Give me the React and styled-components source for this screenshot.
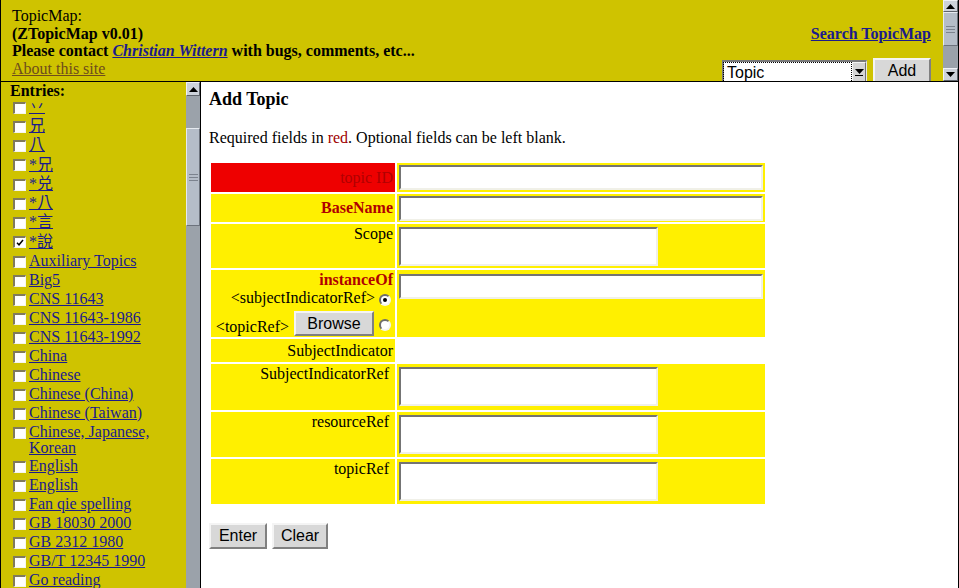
import styled, { createGlobalStyle } from "styled-components";

const GlobalStyle = createGlobalStyle`
  html, body {
    margin: 0;
    padding: 0;
    overflow: hidden;
    background: #fff;
  }
  body {
    font-family: "Liberation Serif", "Noto Sans CJK TC", serif;
    font-size: 16px;
    color: #000;
  }
`;

const OLIVE = "#cfc300";
const LINK = "#1b1b8c";
const DARK_RED = "#b00000";

const Page = styled.div`
  width: 959px;
  height: 588px;
  display: grid;
  grid-template-columns: 200px 1fr;
  grid-template-rows: 82px 1fr;
  overflow: hidden;
`;

/* ---------- scrollbars ---------- */

const Scrollbar = styled.div`
  width: ${(p) => p.$w}px;
  flex: none;
  display: flex;
  flex-direction: column;
  background: #9ba2aa;
  box-sizing: border-box;
`;

const ScrollArrow = styled.div`
  height: ${(p) => p.$h}px;
  flex: none;
  box-sizing: border-box;
  background: #cdd2da;
  border: 1px solid;
  border-color: #f0f2f6 #5f646c #5f646c #f0f2f6;
  display: flex;
  align-items: center;
  justify-content: center;
`;

const ScrollGap = styled.div`
  height: ${(p) => p.$h}px;
  flex: none;
`;

const ScrollRest = styled.div`
  flex: 1;
`;

const ScrollThumb = styled.div`
  height: ${(p) => p.$h}px;
  flex: none;
  box-sizing: border-box;
  background: #b5bdc8;
  border: 1px solid;
  border-color: #e6eaf0 #6c727c #6c727c #e6eaf0;
  display: flex;
  align-items: center;
  justify-content: center;
`;

const Arrow = ({ down }) => (
  <svg width="9" height="5" viewBox="0 0 9 5">
    <polygon points={down ? "0,0 9,0 4.5,5" : "0,5 9,5 4.5,0"} fill="#000" />
  </svg>
);

const Grip = () => (
  <svg width="9" height="9" viewBox="0 0 9 9">
    <g stroke="#7c838e" strokeWidth="1">
      <line x1="0" y1="1.5" x2="9" y2="1.5" />
      <line x1="0" y1="4.5" x2="9" y2="4.5" />
      <line x1="0" y1="7.5" x2="9" y2="7.5" />
    </g>
  </svg>
);

const VScroll = ({ w, arrow, gap, thumb, noDown }) => (
  <Scrollbar $w={w}>
    <ScrollArrow $h={arrow}>
      <Arrow />
    </ScrollArrow>
    <ScrollGap $h={gap} />
    <ScrollThumb $h={thumb}>
      <Grip />
    </ScrollThumb>
    <ScrollRest />
    {!noDown && (
      <ScrollArrow $h={arrow + 1}>
        <Arrow down />
      </ScrollArrow>
    )}
  </Scrollbar>
);

/* ---------- form controls ---------- */

const Button = styled.button`
  box-sizing: border-box;
  width: ${(p) => p.$w}px;
  height: ${(p) => p.$h || 26}px;
  margin: ${(p) => p.$mt || 0}px 0 0;
  padding: 0;
  background: #d8d8d8;
  border: 2px solid;
  border-color: #f4f4f4 #808080 #808080 #f4f4f4;
  font-family: "Liberation Sans", Arial, sans-serif;
  font-size: 16px;
  color: #000;
  flex: none;
`;

const TextField = styled.input`
  box-sizing: border-box;
  display: block;
  width: 364px;
  height: 25px;
  margin: ${(p) => p.$mt || 0}px 0 0;
  background: #fff;
  border: 2px solid;
  border-color: #747474 #f0f0e8 #f0f0e8 #747474;
  padding: 0 3px;
`;

const TextArea = styled.textarea`
  box-sizing: border-box;
  display: block;
  width: 259px;
  height: 39px;
  margin: 2px 0 0;
  background: #fff;
  border: 2px solid;
  border-color: #747474 #f0f0e8 #f0f0e8 #747474;
  resize: none;
`;

const Radio = styled.span`
  box-sizing: border-box;
  width: 12px;
  height: 12px;
  margin: 0 2px ${(p) => p.$mb}px ${(p) => p.$ml}px;
  border-radius: 50%;
  border: 2px solid;
  border-color: #6d6d6d #f4f4f4 #f4f4f4 #6d6d6d;
  background: #fff;
  display: flex;
  align-items: center;
  justify-content: center;
  flex: none;
  &::after {
    content: "";
    width: 4px;
    height: 4px;
    border-radius: 50%;
    background: ${(p) => (p.$on ? "#000" : "transparent")};
  }
`;

const Check = styled.span`
  box-sizing: border-box;
  width: 13px;
  height: 12px;
  margin: 4px 3px 0 3px;
  background: #fff;
  border: 2px solid;
  border-color: #807a5c #f6f6ee #f6f6ee #807a5c;
  border-right-width: 1px;
  border-bottom-width: 1px;
  flex: none;
  display: flex;
  align-items: center;
  justify-content: center;
`;

/* ---------- top frame ---------- */

const TopFrame = styled.header`
  grid-column: 1 / 3;
  display: flex;
  background: ${OLIVE};
  border-left: 1px solid #000;
  border-right: 1px solid #000;
  border-bottom: 1px solid #000;
  overflow: hidden;
`;

const TopContent = styled.div`
  flex: 1;
  display: flex;
  justify-content: space-between;
  padding: 7px 12px 0 11px;
`;

const Intro = styled.div`
  line-height: 17.6px;
`;

const Bold = styled.span`
  font-weight: bold;
`;

const AuthorLink = styled.a`
  color: ${LINK};
  font-weight: bold;
  font-style: italic;
  text-decoration: underline;
`;

const AboutLink = styled.a`
  color: #6e4c1c;
  text-decoration: underline;
`;

const RightCol = styled.div`
  display: flex;
  flex-direction: column;
  align-items: flex-end;
  padding-top: 18px;
`;

const SearchLink = styled.a`
  color: ${LINK};
  font-weight: bold;
  line-height: 17.6px;
  text-decoration: underline;
`;

const ToolRow = styled.div`
  display: flex;
  gap: 6px;
  margin-top: 15px;
`;

const Select = styled.div`
  box-sizing: border-box;
  width: 145px;
  height: 25px;
  margin-top: 2px;
  display: flex;
  background: #fff;
  border: 2px solid;
  border-color: #7a7a7a #e8e8e8 #e8e8e8 #7a7a7a;
  border-right-width: 1px;
`;

const SelectText = styled.div`
  flex: 1;
  margin: 1px 1px 1px 0;
  outline: 1px dotted #000;
  font-family: "Liberation Sans", Arial, sans-serif;
  font-size: 16px;
  line-height: 19px;
  padding-left: 3px;
`;

const SelectArrow = styled.div`
  box-sizing: border-box;
  width: 14px;
  background: #d4d4d4;
  border: 1px solid;
  border-color: #f4f4f4 #707070 #707070 #f4f4f4;
  display: flex;
  flex-direction: column;
  align-items: center;
  justify-content: center;
  gap: 1px;
`;

/* ---------- left frame ---------- */

const LeftFrame = styled.nav`
  display: flex;
  background: ${OLIVE};
  border-left: 1px solid #000;
  overflow: hidden;
`;

const EntryList = styled.div`
  flex: 1;
  padding-left: 9px;
`;

const EntriesTitle = styled.div`
  font-weight: bold;
  line-height: 15px;
  padding-top: 0.5px;
`;

const EntryRow = styled.div`
  display: flex;
  align-items: flex-start;
  min-height: ${(p) => (p.$cjk ? 19.25 : 19)}px;
`;

const EntryLink = styled.a`
  color: ${LINK};
  text-decoration: underline;
  line-height: 16.5px;
  padding-top: 1.25px;
`;

const Tick = () => (
  <svg width="8" height="7" viewBox="0 0 8 7">
    <path d="M1 3.8 L3 5.8 L7 1" stroke="#000" strokeWidth="1.5" fill="none" />
  </svg>
);

const entries = [
  { t: "丷", cjk: true },
  { t: "兄", cjk: true },
  { t: "八", cjk: true },
  { t: "*兄", cjk: true },
  { t: "*兑", cjk: true },
  { t: "*八", cjk: true },
  { t: "*言", cjk: true },
  { t: "*說", cjk: true, on: true },
  { t: "Auxiliary Topics" },
  { t: "Big5" },
  { t: "CNS 11643" },
  { t: "CNS 11643-1986" },
  { t: "CNS 11643-1992" },
  { t: "China" },
  { t: "Chinese" },
  { t: "Chinese (China)" },
  { t: "Chinese (Taiwan)" },
  { t: "Chinese, Japanese, Korean" },
  { t: "English" },
  { t: "English" },
  { t: "Fan qie spelling" },
  { t: "GB 18030 2000" },
  { t: "GB 2312 1980" },
  { t: "GB/T 12345 1990" },
  { t: "Go reading" },
];

/* ---------- main frame ---------- */

const MainFrame = styled.main`
  background: #fff;
  border-left: 1px solid #000;
  border-right: 1px solid #000;
  padding: 6px 8px;
  overflow: hidden;
`;

const Heading = styled.h1`
  margin: 0;
  font-size: 18px;
  line-height: 22px;
  font-weight: bold;
`;

const Lead = styled.p`
  margin: 19px 0 0;
  line-height: 18px;
`;

const Red = styled.span`
  color: #a00000;
`;

const FormTable = styled.table`
  margin-top: 14px;
  border-collapse: separate;
  border-spacing: 2px;
`;

const Row = styled.tr`
  height: ${(p) => p.$h}px;
`;

const LabelCell = styled.td`
  width: 180px;
  padding: 1px 2px;
  text-align: right;
  vertical-align: ${(p) => (p.$top ? "top" : "middle")};
  background: ${(p) => (p.$red ? "#ee0000" : "#fff000")};
  line-height: 18px;
  color: ${(p) => (p.$req ? DARK_RED : "#000")};
  font-weight: ${(p) => (p.$bold ? "bold" : "normal")};
`;

const InputCell = styled.td`
  width: 364px;
  padding: 1px 2px;
  vertical-align: ${(p) => (p.$top ? "top" : "middle")};
  background: ${(p) => (p.$empty ? "transparent" : "#fff000")};
`;

const LabelStack = styled.div`
  display: flex;
  flex-direction: column;
  align-items: flex-end;
`;

const ReqName = styled.div`
  color: ${DARK_RED};
  font-weight: bold;
  line-height: 18px;
`;

const ChoiceLine = styled.div`
  display: flex;
  align-items: flex-end;
  line-height: 18px;
  gap: ${(p) => p.$gap || 0}px;
`;

const ButtonBar = styled.div`
  display: flex;
  gap: 5px;
  margin-top: 17px;
`;

const App = () => {
  return (
    <>
      <GlobalStyle />
      <Page>
        <TopFrame>
          <TopContent>
            <Intro>
              TopicMap:
              <br />
              <Bold>(ZTopicMap v0.01)</Bold>
              <br />
              <Bold>
                Please contact <AuthorLink href="#">Christian Wittern</AuthorLink> with bugs,
                comments, etc...
              </Bold>
              <br />
              <AboutLink href="#">About this site</AboutLink>
            </Intro>
            <RightCol>
              <SearchLink href="#">Search TopicMap</SearchLink>
              <ToolRow>
                <Select>
                  <SelectText>Topic</SelectText>
                  <SelectArrow>
                    <Arrow down />
                    <svg width="8" height="1">
                      <rect width="8" height="1" fill="#000" />
                    </svg>
                  </SelectArrow>
                </Select>
                <Button $w={58}>Add</Button>
              </ToolRow>
            </RightCol>
          </TopContent>
          <VScroll w={15} arrow={12} gap={0} thumb={34} />
        </TopFrame>

        <LeftFrame>
          <EntryList>
            <EntriesTitle>Entries:</EntriesTitle>
            {entries.map((e, i) => (
              <EntryRow key={i} $cjk={e.cjk}>
                <Check>{e.on && <Tick />}</Check>
                <EntryLink href="#">{e.t}</EntryLink>
              </EntryRow>
            ))}
          </EntryList>
          <VScroll w={14} arrow={14} gap={32} thumb={98} noDown />
        </LeftFrame>

        <MainFrame>
          <Heading>Add Topic</Heading>
          <Lead>
            Required fields in <Red>red</Red>. Optional fields can be left blank.
          </Lead>
          <FormTable>
            <tbody>
              <Row $h={29}>
                <LabelCell $red $req>topic ID</LabelCell>
                <InputCell>
                  <TextField />
                </InputCell>
              </Row>
              <Row $h={28}>
                <LabelCell $req $bold>BaseName</LabelCell>
                <InputCell>
                  <TextField />
                </InputCell>
              </Row>
              <Row $h={44}>
                <LabelCell $top>Scope</LabelCell>
                <InputCell $top>
                  <TextArea />
                </InputCell>
              </Row>
              <Row $h={67}>
                <LabelCell $top>
                  <LabelStack>
                    <ReqName>instanceOf</ReqName>
                    <ChoiceLine>
                      &lt;subjectIndicatorRef&gt;
                      <Radio $on $mb={1} $ml={4} />
                    </ChoiceLine>
                    <ChoiceLine $gap={5}>
                      <span>&lt;topicRef&gt;</span>
                      <Button $w={80} $h={25} $mt={4}>Browse</Button>
                      <Radio $mb={5} $ml={0} />
                    </ChoiceLine>
                  </LabelStack>
                </LabelCell>
                <InputCell $top>
                  <TextField $mt={3} />
                </InputCell>
              </Row>
              <Row $h={23}>
                <LabelCell>SubjectIndicator</LabelCell>
                <InputCell $empty />
              </Row>
              <Row $h={46}>
                <LabelCell $top>SubjectIndicatorRef{"\u00a0"}</LabelCell>
                <InputCell $top>
                  <TextArea />
                </InputCell>
              </Row>
              <Row $h={45}>
                <LabelCell $top>resourceRef{"\u00a0"}</LabelCell>
                <InputCell $top>
                  <TextArea />
                </InputCell>
              </Row>
              <Row $h={45}>
                <LabelCell $top>topicRef{"\u00a0"}</LabelCell>
                <InputCell $top>
                  <TextArea />
                </InputCell>
              </Row>
            </tbody>
          </FormTable>
          <ButtonBar>
            <Button $w={58}>Enter</Button>
            <Button $w={56}>Clear</Button>
          </ButtonBar>
        </MainFrame>
      </Page>
    </>
  );
};

export default App;
